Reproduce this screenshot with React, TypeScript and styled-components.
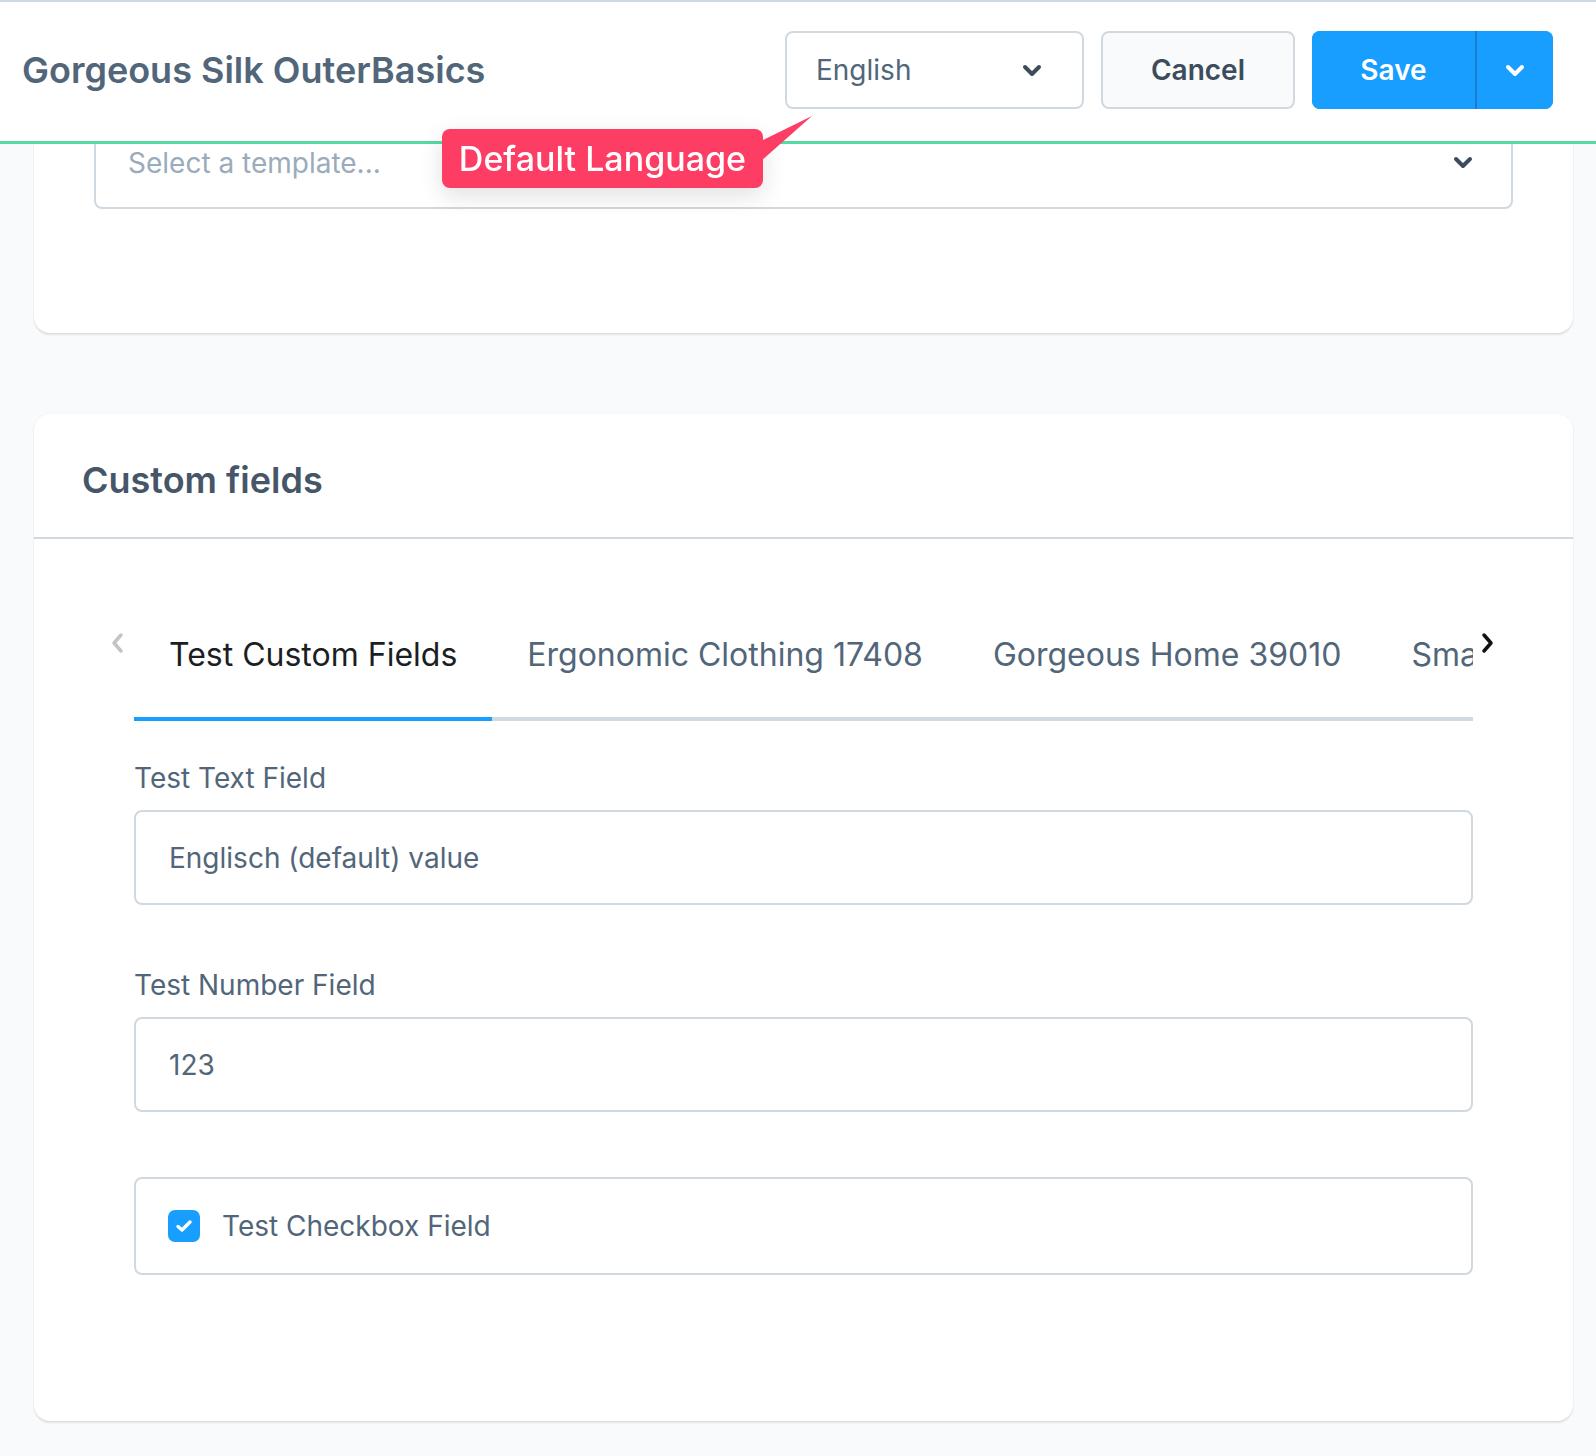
import React from "react";
import styled, { createGlobalStyle } from "styled-components";

const GlobalStyle = createGlobalStyle`
  * { box-sizing: border-box; }
  html, body { margin: 0; padding: 0; }
  body {
    background: #f9fafb;
    font-family: Inter, "Noto Sans", "Liberation Sans", sans-serif;
    -webkit-font-smoothing: antialiased;
  }
`;

const Page = styled.div`
  min-height: 1456px;
  background: #f9fafb;
`;

const Header = styled.header`
  position: fixed;
  top: 0;
  left: 0;
  right: 0;
  z-index: 10;
  height: 144px;
  background: #fff;
  border-top: 2px solid #d1d9e0;
  border-bottom: 3px solid #57d9a3;
  display: flex;
  align-items: center;
  justify-content: space-between;
  padding: 0 43px 3px 22px;
`;

const Title = styled.h1`
  margin: 0;
  font-size: 36px;
  font-weight: 600;
  color: #52667a;
  letter-spacing: 0;
`;

const Actions = styled.div`
  display: flex;
  align-items: center;
  gap: 17px;
`;

const LangWrap = styled.div`
  position: relative;
`;

const LangSelect = styled.div`
  width: 299px;
  height: 78px;
  border: 2px solid #d1d9e0;
  border-radius: 8px;
  background: #fff;
  display: flex;
  align-items: center;
  justify-content: space-between;
  padding: 0 40px 0 29px;
  font-size: 28px;
  color: #52667a;
`;

const Tooltip = styled.div`
  position: absolute;
  top: calc(100% + 20px);
  right: calc(100% + 22px);
  height: 59px;
  padding: 0 17px;
  display: flex;
  align-items: center;
  white-space: nowrap;
  background: #fd3d64;
  color: #fff;
  border-radius: 8px;
  font-size: 34px;
  font-weight: 500;
  box-shadow: 0 8px 24px rgba(0, 0, 0, 0.12);

  &::after {
    content: "";
    position: absolute;
    left: calc(100% - 2px);
    top: -13px;
    width: 52px;
    height: 46px;
    background: #fd3d64;
    clip-path: polygon(0 25px, 51px 0, 0 45px);
  }
`;

const CancelButton = styled.button`
  width: 194px;
  height: 78px;
  border: 2px solid #d1d9e0;
  border-radius: 8px;
  background: #f9fafb;
  font-family: inherit;
  font-size: 28px;
  font-weight: 600;
  color: #3d4c5c;
  cursor: pointer;
`;

const SaveGroup = styled.div`
  display: flex;
  height: 78px;
  border-radius: 8px;
  overflow: hidden;
  background: #189eff;
`;

const SaveButton = styled.button`
  width: 163px;
  height: 100%;
  border: 0;
  background: #189eff;
  color: #fff;
  font-family: inherit;
  font-size: 28px;
  font-weight: 600;
  cursor: pointer;
`;

const SaveArrow = styled.button`
  width: 78px;
  height: 100%;
  border: 0;
  border-left: 2px solid #1a7ccc;
  background: #189eff;
  display: flex;
  align-items: center;
  justify-content: center;
  cursor: pointer;
`;

const Content = styled.main`
  padding: 56px 23px 34px 34px;
  display: flex;
  flex-direction: column;
  gap: 81px;
`;

const Card = styled.section`
  background: #fff;
  border-radius: 16px;
  box-shadow: 0 2px 2px rgba(0, 0, 0, 0.1), 0 0 2px rgba(0, 0, 0, 0.06);
`;

const CardBody = styled.div<{ $pad: string }>`
  padding: ${(p) => p.$pad};
`;

const CardHeader = styled.div`
  height: 125px;
  padding: 0 48px;
  border-bottom: 2px solid #d1d9e0;
  display: flex;
  align-items: center;
`;

const CardTitle = styled.h2`
  margin: 0;
  font-size: 36px;
  font-weight: 600;
  color: #465668;
  padding-top: 9px;
`;

const TemplateSelect = styled.div`
  height: 93px;
  border: 2px solid #d1d9e0;
  border-radius: 8px;
  display: flex;
  align-items: center;
  justify-content: space-between;
  padding: 0 38px 0 32px;
  font-size: 28px;
  color: #9aabbb;
  margin-bottom: 64px;
`;

const TabsRow = styled.div`
  display: flex;
  align-items: flex-start;
  margin: 0 -34px;
`;

const TabArrow = styled.div<{ $side: "left" | "right" }>`
  width: 34px;
  flex: none;
  display: flex;
  justify-content: ${(p) => (p.$side === "left" ? "center" : "flex-start")};
  padding-top: 33px;
  padding-left: ${(p) => (p.$side === "left" ? "0" : "8px")};
`;

const TabStrip = styled.div`
  flex: 1;
  display: flex;
  overflow: hidden;
  box-shadow: inset 0 -4px 0 #d1d9e0;
`;

const Tab = styled.div<{ $active?: boolean }>`
  flex: none;
  padding: 36px 35px 46px;
  line-height: 40px;
  font-size: 32px;
  white-space: nowrap;
  color: ${(p) => (p.$active ? "#1b1e22" : "#52667a")};
  box-shadow: ${(p) => (p.$active ? "inset 0 -4px 0 #189eff" : "none")};
`;

const Field = styled.div<{ $mb: number }>`
  margin-bottom: ${(p) => p.$mb}px;
`;

const Label = styled.div`
  font-size: 28px;
  line-height: 40px;
  color: #52667a;
  margin-bottom: 12px;
`;

const Input = styled.div`
  height: 95px;
  border: 2px solid #d1d9e0;
  border-radius: 8px;
  display: flex;
  align-items: center;
  padding: 0 33px;
  font-size: 28px;
  color: #52667a;
`;

const CheckboxBox = styled.div`
  height: 98px;
  border: 2px solid #d1d9e0;
  border-radius: 8px;
  display: flex;
  align-items: center;
  gap: 22px;
  padding: 0 32px;
  font-size: 28px;
  color: #52667a;
`;

const Check = styled.span`
  width: 32px;
  height: 32px;
  border-radius: 7px;
  background: #189eff;
  display: flex;
  align-items: center;
  justify-content: center;
`;

const Spacer = styled.div`
  height: 37px;
`;

const Chevron = ({ color }: { color: string }) => (
  <svg width="20" height="13" viewBox="0 0 20 13" aria-hidden>
    <polyline
      points="3,3 10,10 17,3"
      fill="none"
      stroke={color}
      strokeWidth="4"
      strokeLinecap="round"
      strokeLinejoin="round"
    />
  </svg>
);

const SideChevron = ({ dir, color }: { dir: "left" | "right"; color: string }) => (
  <svg width="14" height="22" viewBox="0 0 14 22" aria-hidden>
    <polyline
      points={dir === "left" ? "11,3 4,11 11,19" : "3,3 10,11 3,19"}
      fill="none"
      stroke={color}
      strokeWidth="3.5"
      strokeLinecap="round"
      strokeLinejoin="round"
    />
  </svg>
);

const CheckMark = () => (
  <svg width="18" height="14" viewBox="0 0 18 14" aria-hidden>
    <polyline
      points="3,7.5 7,11 15,3"
      fill="none"
      stroke="#fff"
      strokeWidth="3.4"
      strokeLinecap="round"
      strokeLinejoin="round"
    />
  </svg>
);

const tabs = [
  "Test Custom Fields",
  "Ergonomic Clothing 17408",
  "Gorgeous Home 39010",
  "Small Hat",
];

export default function App() {
  return (
    <Page>
      <GlobalStyle />
      <Header>
        <Title>Gorgeous Silk OuterBasics</Title>
        <Actions>
          <LangWrap>
            <LangSelect>
              <span>English</span>
              <Chevron color="#3d4c5c" />
            </LangSelect>
            <Tooltip>Default Language</Tooltip>
          </LangWrap>
          <CancelButton>Cancel</CancelButton>
          <SaveGroup>
            <SaveButton>Save</SaveButton>
            <SaveArrow>
              <Chevron color="#ffffff" />
            </SaveArrow>
          </SaveGroup>
        </Actions>
      </Header>
      <Content>
        <Card>
          <CardBody $pad="60px 60px 60px">
            <TemplateSelect>
              <span>Select a template...</span>
              <Chevron color="#3d4c5c" />
            </TemplateSelect>
          </CardBody>
        </Card>
        <Card>
          <CardHeader>
            <CardTitle>Custom fields</CardTitle>
          </CardHeader>
          <CardBody $pad="60px 100px 146px">
            <TabsRow>
              <TabArrow $side="left">
                <SideChevron dir="left" color="#c4c4c4" />
              </TabArrow>
              <TabStrip>
                {tabs.map((t, i) => (
                  <Tab key={t} $active={i === 0}>
                    {t}
                  </Tab>
                ))}
              </TabStrip>
              <TabArrow $side="right">
                <SideChevron dir="right" color="#111111" />
              </TabArrow>
            </TabsRow>
            <Spacer />
            <Field $mb={60}>
              <Label>Test Text Field</Label>
              <Input>Englisch (default) value</Input>
            </Field>
            <Field $mb={65}>
              <Label>Test Number Field</Label>
              <Input>123</Input>
            </Field>
            <CheckboxBox>
              <Check>
                <CheckMark />
              </Check>
              <span>Test Checkbox Field</span>
            </CheckboxBox>
          </CardBody>
        </Card>
      </Content>
    </Page>
  );
}
